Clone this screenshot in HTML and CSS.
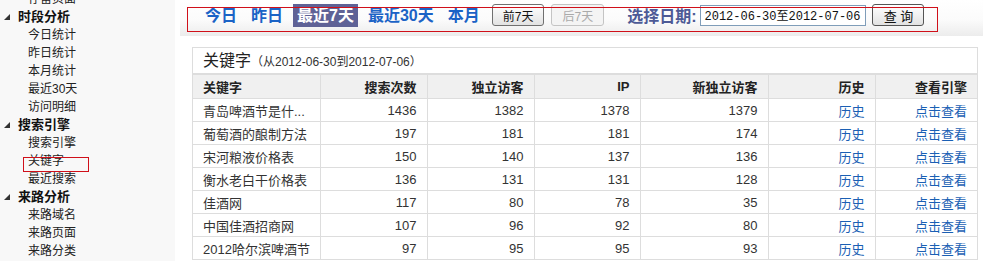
FILE: index.html
```html
<!DOCTYPE html>
<html lang="zh-CN">

<head>
	<meta charset="UTF-8">
	<title>关键字</title>
	<link rel="stylesheet" href="styles.css">
</head>

<body>
	<div class="page">
		<div class="sidebar">
			<ul class="menu">
				<li class="sub">存留页面</li>
				<li class="group"><i class="arrow"></i>时段分析</li>
				<li class="sub">今日统计</li>
				<li class="sub">昨日统计</li>
				<li class="sub">本月统计</li>
				<li class="sub">最近30天</li>
				<li class="sub">访问明细</li>
				<li class="group"><i class="arrow"></i>搜索引擎</li>
				<li class="sub">搜索引擎</li>
				<li class="sub current">关键字</li>
				<li class="sub">最近搜索</li>
				<li class="group"><i class="arrow"></i>来路分析</li>
				<li class="sub">来路域名</li>
				<li class="sub">来路页面</li>
				<li class="sub">来路分类</li>
			</ul>
		</div>

		<div class="main">
			<div class="toolbar">
				<a class="quick">今日</a>
				<a class="quick">昨日</a>
				<a class="quick selected">最近7天</a>
				<a class="quick">最近30天</a>
				<a class="quick">本月</a>
				<button class="btn btn-prev">前7天</button>
				<button class="btn btn-next" disabled>后7天</button>
				<span class="date-label">选择日期:</span>
				<input class="date-input" type="text" value="2012-06-30至2012-07-06">
				<button class="btn btn-query">查 询</button>
				<span class="toolbar-mark"></span>
			</div>

			<div class="panel">
				<div class="panel-title">关键字<span class="range">（从2012-06-30到2012-07-06）</span></div>
				<table class="stat-table">
					<colgroup>
						<col class="c-key">
						<col class="c-num">
						<col class="c-num">
						<col class="c-ip">
						<col class="c-new">
						<col class="c-num">
						<col>
					</colgroup>
					<thead>
						<tr>
							<th class="key">关键字</th>
							<th>搜索次数</th>
							<th>独立访客</th>
							<th>IP</th>
							<th>新独立访客</th>
							<th>历史</th>
							<th>查看引擎</th>
						</tr>
					</thead>
					<tbody>
						<tr>
							<td class="key">青岛啤酒节是什...</td>
							<td>1436</td>
							<td>1382</td>
							<td>1378</td>
							<td>1379</td>
							<td><a>历史</a></td>
							<td><a>点击查看</a></td>
						</tr>
						<tr>
							<td class="key">葡萄酒的酿制方法</td>
							<td>197</td>
							<td>181</td>
							<td>181</td>
							<td>174</td>
							<td><a>历史</a></td>
							<td><a>点击查看</a></td>
						</tr>
						<tr>
							<td class="key">宋河粮液价格表</td>
							<td>150</td>
							<td>140</td>
							<td>137</td>
							<td>136</td>
							<td><a>历史</a></td>
							<td><a>点击查看</a></td>
						</tr>
						<tr>
							<td class="key">衡水老白干价格表</td>
							<td>136</td>
							<td>131</td>
							<td>131</td>
							<td>128</td>
							<td><a>历史</a></td>
							<td><a>点击查看</a></td>
						</tr>
						<tr>
							<td class="key">佳酒网</td>
							<td>117</td>
							<td>80</td>
							<td>78</td>
							<td>35</td>
							<td><a>历史</a></td>
							<td><a>点击查看</a></td>
						</tr>
						<tr>
							<td class="key">中国佳酒招商网</td>
							<td>107</td>
							<td>96</td>
							<td>92</td>
							<td>80</td>
							<td><a>历史</a></td>
							<td><a>点击查看</a></td>
						</tr>
						<tr>
							<td class="key">2012哈尔滨啤酒节</td>
							<td>97</td>
							<td>95</td>
							<td>95</td>
							<td>93</td>
							<td><a>历史</a></td>
							<td><a>点击查看</a></td>
						</tr>
					</tbody>
				</table>
			</div>
		</div>
	</div>
</body>

</html>
```

FILE: styles.css
```css
body {
	margin: 0;
	background-color: #fff;
	font-family: "Liberation Sans", "Noto Sans CJK SC", sans-serif;
	font-size: 12px;
	color: #222;
	overflow: hidden;
}

.page {
	display: flex;
	height: 261px;
}

/* Sidebar menu */

.sidebar {
	width: 175px;
	flex-shrink: 0;
	background-color: #f8f8f8;
	overflow: hidden;
}

.menu {
	list-style: none;
	margin: -10px 0 0 0;
	padding: 0;
}

.menu li {
	line-height: 18px;
	height: 18px;
	white-space: nowrap;
}

.menu .group {
	padding-left: 4px;
	font-size: 13px;
	font-weight: bold;
	color: #111;
}

.menu .arrow {
	display: inline-block;
	width: 0;
	height: 0;
	border-left: 6px solid transparent;
	border-bottom: 6px solid #333;
	margin-right: 8px;
	vertical-align: 1px;
}

.menu .sub {
	padding-left: 28px;
	color: #222;
}

.menu .current {
	position: relative;
}

.menu .current::after {
	content: "";
	position: absolute;
	left: 23px;
	top: 5px;
	width: 64px;
	height: 13px;
	border: 1px solid #d0101a;
}

/* Main area */

.main {
	flex: 1;
	min-width: 0;
	padding-left: 5px;
}

.toolbar {
	position: relative;
	display: flex;
	align-items: center;
	height: 30px;
	padding: 0 0 6px 21px;
	background: linear-gradient(#fff 0%, #fbfbfb 55%, #ececec 100%);
}

/* red highlight frame drawn over the toolbar */
.toolbar-mark {
	position: absolute;
	left: 7px;
	top: 7px;
	width: 749px;
	height: 23px;
	border: 1px solid #d0101a;
	pointer-events: none;
}

.toolbar .quick {
	padding: 2px 4px;
	margin-right: 6px;
	font-size: 16px;
	font-weight: bold;
	line-height: 19px;
	color: #1b63c6;
}

.toolbar .selected {
	background-color: #5f6296;
	color: #fff;
}

.btn {
	height: 22px;
	padding: 0 10px;
	margin-left: 6px;
	font-family: "Liberation Sans", "Noto Sans CJK SC", sans-serif;
	font-size: 12px;
	color: #111;
	border: 1px solid #707070;
	border-radius: 3px;
	background: linear-gradient(#fff, #e2e2e2);
}

.btn-prev {
	margin-left: 2px;
}

.btn-next {
	margin-left: 7px;
	color: #aaa;
	border-color: #c4c4c4;
	background: #f4f4f4;
}

.btn-query {
	width: 52px;
	margin-left: 6px;
	padding: 0;
	font-size: 13px;
	border-color: #555;
}

.date-label {
	margin-left: 23px;
	font-size: 16px;
	font-weight: bold;
	color: #4d5a96;
}

.date-input {
	width: 166px;
	height: 21px;
	box-sizing: border-box;
	margin-left: 4px;
	padding: 0 3px;
	border: 1px solid #7f9db9;
	font-family: "Liberation Mono", "Noto Sans CJK SC", monospace;
	font-size: 12px;
	color: #111;
}

/* Keyword panel */

.panel {
	margin: 11px 5px 0 12px;
	border: 1px solid #ddd;
	border-bottom: none;
}

.panel-title {
	height: 25px;
	line-height: 25px;
	padding-left: 10px;
	font-size: 16px;
	color: #222;
	border-bottom: 1px solid #ddd;
}

.panel-title .range {
	font-size: 12px;
	color: #333;
}

.stat-table {
	width: 100%;
	border-collapse: collapse;
	table-layout: fixed;
}

.stat-table .c-key {
	width: 127px;
}

.stat-table .c-num {
	width: 107px;
}

.stat-table .c-ip {
	width: 106px;
}

.stat-table .c-new {
	width: 128px;
}

.stat-table th,
.stat-table td {
	padding: 0 10px;
	text-align: right;
	white-space: nowrap;
	overflow: hidden;
	border: 1px solid #ddd;
}

.stat-table th:first-child,
.stat-table td:first-child {
	border-left: none;
}

.stat-table th:last-child,
.stat-table td:last-child {
	border-right: none;
}

.stat-table th {
	height: 23px;
	background-color: #f0f0f0;
	font-size: 13px;
	font-weight: bold;
	color: #222;
}

.stat-table td {
	height: 22px;
	font-size: 13px;
	color: #333;
}

.stat-table .key {
	text-align: left;
}

.stat-table a {
	color: #1a5fb4;
}
```
